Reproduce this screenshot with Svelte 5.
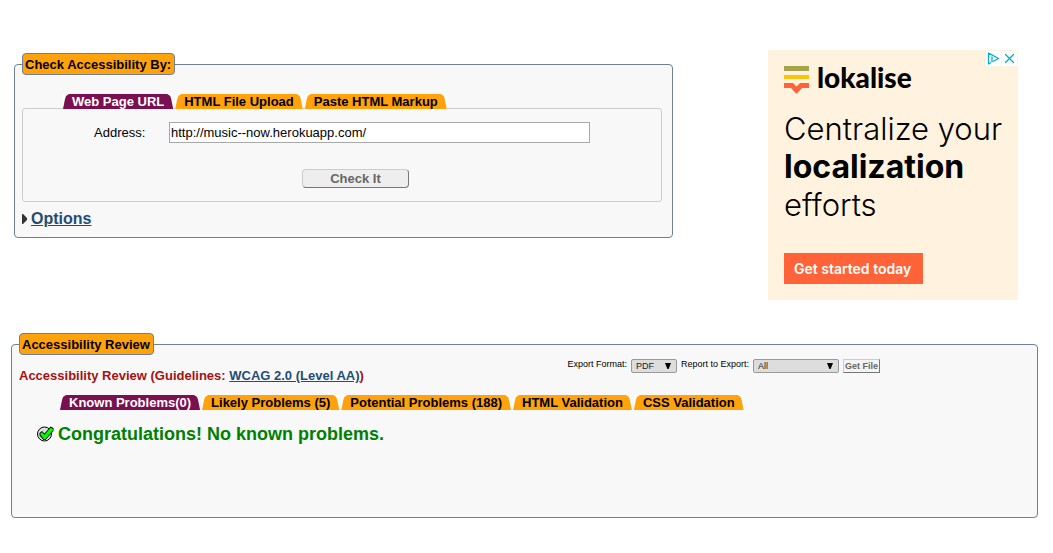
<script>
  let address = $state('http://music--now.herokuapp.com/');
  let inputTab = $state(0);
  let reviewTab = $state(0);
  const inputTabs = ['Web Page URL', 'HTML File Upload', 'Paste HTML Markup'];
  const reviewTabs = [
    'Known Problems(0)',
    'Likely Problems (5)',
    'Potential Problems (188)',
    'HTML Validation',
    'CSS Validation'
  ];
</script>

{#snippet arrow()}
  <svg class="arrow" viewBox="0 0 6 6" width="6" height="6" aria-hidden="true"><path d="M0 0h6L3.6 6H2.4z" /></svg>
{/snippet}

<main>
  <div class="top">
    <fieldset class="check">
      <legend>Check Accessibility By:</legend>
      <ul class="tabs">
        {#each inputTabs as tab, i}
          <li><button type="button" class:active={i === inputTab} onclick={() => (inputTab = i)}>{tab}</button></li>
        {/each}
      </ul>
      <form class="panel" onsubmit={(e) => e.preventDefault()}>
        <div class="field">
          <label for="address">Address:</label>
          <input id="address" type="text" bind:value={address} />
        </div>
        <div class="submit"><button type="submit">Check It</button></div>
      </form>
      <h2 class="options">
        <svg viewBox="0 0 5 10" width="5" height="10" aria-hidden="true"><path d="M0 0h1l4 4v2l-4 4H0z" fill="#333" /></svg>
        <a href="#options">Options</a>
      </h2>
    </fieldset>

    <aside class="ad">
      <div class="adchoices">
        <a href="#adchoices" aria-label="Ad choices">
          <svg viewBox="0 0 15 15" width="15" height="15"><path d="M5 11.500L2.500 13V2l10 5.500-5.500 3M6 5.500V11" fill="none" stroke="#00aecd" stroke-width="1.300" stroke-linejoin="round" /><path d="M6 3.500v1" stroke="#00aecd" /></svg>
        </a>
        <button type="button" aria-label="Close ad">
          <svg viewBox="0 0 15 15" width="15" height="15"><path d="M3.500 3.500l8 8M11.500 3.500l-8 8" stroke="#00aecd" stroke-width="1.300" stroke-linecap="round" /></svg>
        </button>
      </div>
      <div class="brand">
        <svg viewBox="0 0 25 28" width="25" height="28" aria-hidden="true">
          <path d="M0 0h25v5H0z" fill="#a4a44d" />
          <path d="M0 9h25v4H0z" fill="#ffc107" />
          <path d="M0 17h9l3.500 3.500L16 17h9v5h-7l-5.500 6L7 22H0z" fill="#ff6337" />
        </svg>
        <span>lokalise</span>
      </div>
      <p>Centralize your<br /><strong>localization</strong><br />efforts</p>
      <a class="cta" href="#start">Get started today</a>
    </aside>
  </div>

  <fieldset class="review">
    <legend>Accessibility Review</legend>
    <div class="head">
      <h3>Accessibility Review (Guidelines: <a href="#wcag">WCAG 2.0 (Level AA)</a>)</h3>
      <form class="export" onsubmit={(e) => e.preventDefault()}>
        <label for="format">Export Format:</label>
        <span class="select format">
          <select id="format"><option>PDF</option></select>
          {@render arrow()}
        </span>
        <label for="report">Report to Export:</label>
        <span class="select report">
          <select id="report"><option>All</option></select>
          {@render arrow()}
        </span>
        <button type="submit">Get File</button>
      </form>
    </div>
    <ul class="tabs">
      {#each reviewTabs as tab, i}
        <li><button type="button" class:active={i === reviewTab} onclick={() => (reviewTab = i)}>{tab}</button></li>
      {/each}
    </ul>
    <p class="result">
      <svg viewBox="0 0 17 16" width="17" height="16" aria-hidden="true">
        <circle cx="7.500" cy="8" r="7" fill="#ddd" stroke="#000" />
        <path d="M2.500 7L5 5l2.500 2.500L13.500.5 16.500 2v3L8.500 14H6.500L2.500 9.500z" fill="#000" />
        <path d="M3.500 8L5 6.500l2.500 2.800L13.700 2l1.800 1v1.500L8 13H7z" fill="#0f0" stroke="#0f0" stroke-width=".8" />
      </svg>
      <span>Congratulations! No known problems.</span>
    </p>
  </fieldset>
</main>

<style>
  :global(body) {
    margin: 0;
    background: #fff;
  }
  main {
    padding: 50px 15px 35px 11px;
    font: 13px/16px 'Liberation Sans', Arial, sans-serif;
    color: #000;
  }
  button, input, select {
    box-sizing: border-box;
    margin: 0;
    font-family: inherit;
  }
  a {
    color: #1f4d75;
  }
  .top {
    display: grid;
    grid-template-columns: minmax(0, 1fr) 250px;
    gap: 95px;
    align-items: start;
    padding: 0 20px 0 3px;
    margin-bottom: 33px;
  }
  fieldset {
    min-width: 0;
    margin: 0;
    border: 1px solid #708090;
    border-radius: 4px;
    background: #f8f8f8;
  }
  legend {
    padding: 3px 3px 1px 2px;
    border: 1px solid #708090;
    border-radius: 4px;
    background: #ffa20c;
    font-weight: bold;
  }
  .check {
    margin-top: 3px;
    padding: 19px 10px 9px 7px;
  }
  .tabs {
    display: flex;
    gap: 2px;
    margin: 0;
    padding: 0 0 0 41px;
    list-style: none;
  }
  .tabs li {
    display: flex;
    background: #fff;
  }
  .tabs button {
    height: 15px;
    padding: 0 9px;
    border: 0;
    background: #ffa20c;
    color: #000;
    font-size: 13px;
    font-weight: bold;
    line-height: 15px;
    white-space: nowrap;
    clip-path: polygon(0 100%, 2px 5px, 3px 2px, 6px 0, calc(100% - 6px) 0, calc(100% - 3px) 2px, calc(100% - 2px) 5px, 100% 100%);
  }
  .tabs button.active {
    background: #7a1050;
    color: #fff;
  }
  .check .tabs {
    position: relative;
    margin-bottom: -1px;
  }
  .panel {
    padding: 13px 71px;
    border: 1px solid #ccc;
    border-radius: 3px;
  }
  .field {
    display: flex;
    align-items: center;
  }
  .field label {
    width: 75px;
  }
  .field input {
    flex: 1;
    min-width: 0;
    height: 21px;
    padding: 0 1px;
    border: 1px solid #a9a9a9;
    border-radius: 0;
    background: #fff;
    color: #000;
    font-size: 13px;
  }
  .submit {
    display: flex;
    justify-content: center;
    margin-top: 26px;
    padding-left: 27px;
  }
  .submit button {
    width: 107px;
    height: 19px;
    padding: 0;
    border: 1px solid;
    border-color: #ccc #767676 #767676 #ccc;
    border-radius: 4px;
    background: #eee;
    color: #666;
    font-size: 13px;
    font-weight: bold;
    line-height: 17px;
  }
  .options {
    display: flex;
    align-items: center;
    gap: 4px;
    margin: 8px 0 0;
    font-size: 16px;
    line-height: 18px;
  }
  .ad {
    display: flex;
    flex-direction: column;
    align-items: flex-start;
    position: relative;
    padding: 16px;
    background: #fff3df;
    font-family: Inter, sans-serif;
  }
  .adchoices {
    display: flex;
    gap: 1px;
    position: absolute;
    top: 1px;
    right: 1px;
  }
  .adchoices a, .adchoices button {
    display: block;
    height: 15px;
    padding: 0;
    border: 0;
    background: #fff;
  }
  .adchoices svg {
    display: block;
  }
  .brand {
    display: flex;
    gap: 8px;
    font: 900 28px/22px Lato, sans-serif;
  }
  .ad p {
    margin: 16px 0 0;
    font-size: 31px;
    font-weight: 300;
    line-height: 38px;
    white-space: nowrap;
  }
  .ad strong {
    font-size: 32px;
    font-weight: 700;
  }
  .cta {
    margin-top: 29px;
    padding: 0 12px 0 10px;
    background: #ff6337;
    color: #fff;
    font-size: 14px;
    font-weight: 600;
    line-height: 31px;
    text-decoration: none;
    white-space: nowrap;
  }
  .review {
    min-height: 185px;
    box-sizing: border-box;
    padding: 4px 7px;
  }
  .head {
    display: flex;
    justify-content: space-between;
    align-items: flex-start;
    padding-right: 150px;
  }
  h3 {
    margin: 9px 0 0;
    color: #a61111;
    font-size: 13px;
    line-height: 16px;
  }
  .export {
    display: flex;
    align-items: flex-start;
    gap: 4px;
    font-size: 9px;
    line-height: 10px;
    white-space: nowrap;
  }
  .select {
    display: grid;
    align-items: center;
  }
  .select select {
    grid-area: 1 / 1;
    width: 100%;
    height: 14px;
    padding: 0 4px;
    appearance: none;
    border: 1px solid #999;
    border-radius: 2px;
    background: #ddd;
    color: #222;
    font-size: 9px;
    line-height: 12px;
  }
  .format {
    width: 46px;
  }
  .report {
    width: 86px;
  }
  .arrow {
    grid-area: 1 / 1;
    justify-self: end;
    margin-right: 6px;
    pointer-events: none;
  }
  .export button {
    height: 14px;
    padding: 0 1px;
    border: 1px solid;
    border-color: #ccc #767676 #767676 #ccc;
    background: #f4f4f4;
    color: #666;
    font-size: 9px;
    font-weight: bold;
    line-height: 12px;
  }
  .review .tabs {
    margin-top: 11px;
  }
  .result {
    display: flex;
    align-items: center;
    gap: 4px;
    margin: 14px 0 0 18px;
    color: #008000;
    font-size: 18px;
    font-weight: bold;
    line-height: 20px;
  }
</style>
